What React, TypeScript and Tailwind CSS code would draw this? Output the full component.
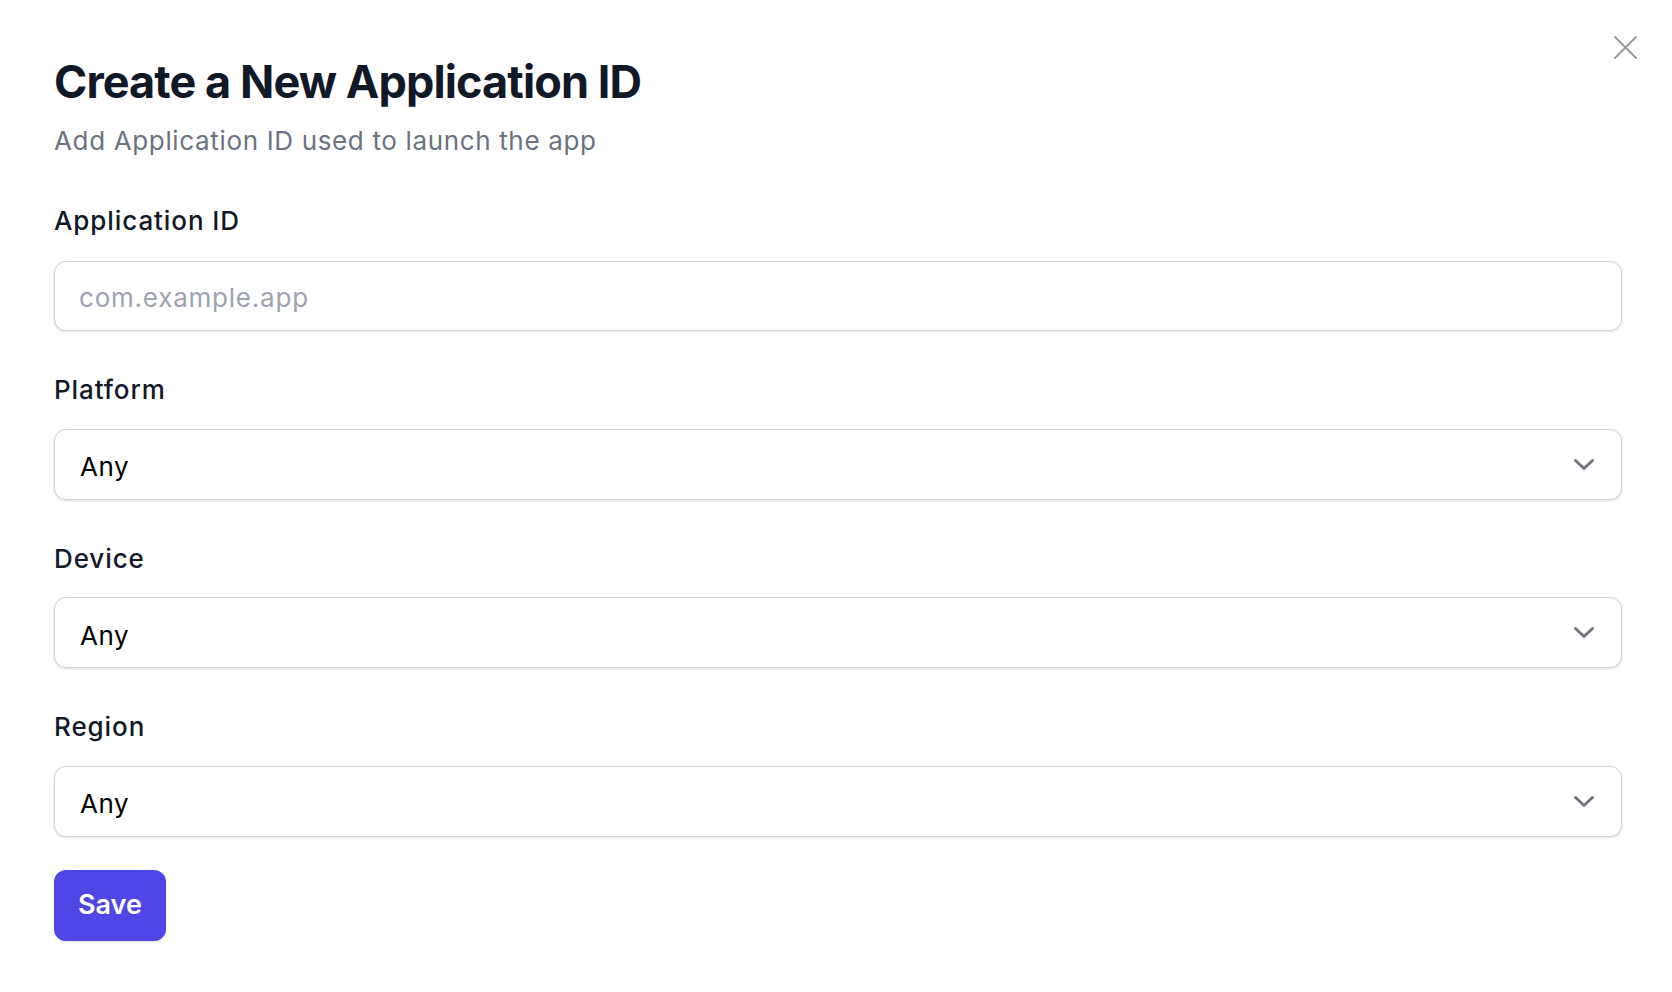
import { useState } from "react";

const FIELDS = ["Platform", "Device", "Region"];

function Chevron() {
  return (
    <svg width="20" height="11" viewBox="0 0 20 11" fill="none" className="shrink-0">
      <path d="M1.5 1.5L10 9.5L18.5 1.5" stroke="#6b7280" strokeWidth="2.8" strokeLinecap="round" strokeLinejoin="round" />
    </svg>
  );
}

function SelectField({ label }: { label: string }) {
  return (
    <div className="flex flex-col">
      <label className="text-[26px] leading-[37.5px] font-medium tracking-[0.035em] text-[#111827]">{label}</label>
      <div className="mt-[20px] h-[71px] flex items-center justify-between pl-[25px] pr-[27px] rounded-[12px] border-[1.5px] border-[#d1d5db] bg-white shadow-sm">
        <span className="pt-[5px] text-[26px] tracking-[0.02em] text-black">Any</span>
        <Chevron />
      </div>
    </div>
  );
}

export default function App() {
  const [appId, setAppId] = useState("");

  return (
    <div className="relative min-h-[992px] w-full bg-white font-['Inter',sans-serif]">
      <button className="absolute right-[35px] top-[36px] w-[23px] h-[23px]" aria-label="Close">
        <svg width="23" height="23" viewBox="0 0 23 23" fill="none">
          <path d="M1 1L22 22M22 1L1 22" stroke="#9a9a9a" strokeWidth="2" strokeLinecap="round" />
        </svg>
      </button>

      <div className="pl-[54px] pr-[50px] pt-[56px]">
        <h1 className="text-[45px] leading-[52px] font-bold tracking-[-0.02em] text-[#111827]">
          Create a New Application ID
        </h1>
        <p className="mt-[14px] text-[26px] leading-[37.5px] tracking-[0.025em] text-[#6b7280]">
          Add Application ID used to launch the app
        </p>

        <div className="mt-[42px] flex flex-col gap-[40px]">
          <div className="flex flex-col">
            <label className="text-[26px] leading-[37.5px] font-medium tracking-[0.035em] text-[#111827]">
              Application ID
            </label>
            <input
              value={appId}
              onChange={(e) => setAppId(e.target.value)}
              placeholder="com.example.app"
              className="mt-[22px] h-[70px] px-[24px] pt-[3px] rounded-[12px] border-[1.5px] border-[#d1d5db] bg-white shadow-sm text-[26px] tracking-[0.03em] text-black placeholder:text-[#9ca3af] outline-none"
            />
          </div>
          {FIELDS.map((f) => (
            <SelectField key={f} label={f} />
          ))}
        </div>

        <button className="mt-[33px] h-[71px] px-[24px] rounded-[12px] bg-[#4f46e5] text-white text-[27px] font-semibold shadow-sm">
          Save
        </button>
      </div>
    </div>
  );
}
